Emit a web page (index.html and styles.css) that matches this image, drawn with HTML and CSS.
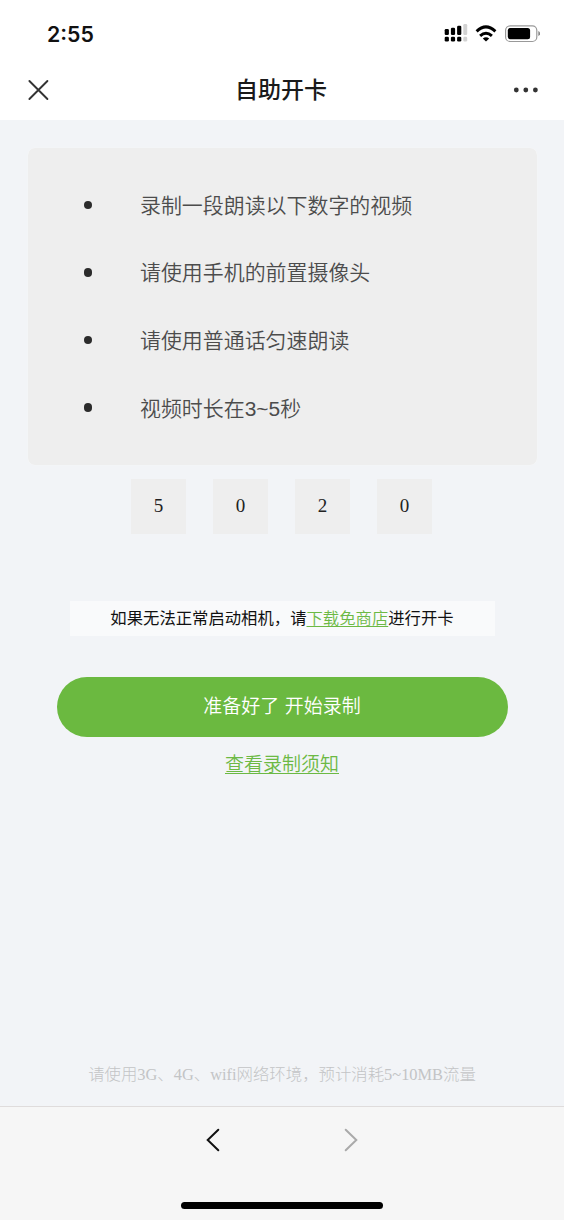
FILE: index.html
```html
<!DOCTYPE html>
<html lang="zh-CN">
<head>
<meta charset="utf-8">
<title>自助开卡</title>
<link rel="stylesheet" href="styles.css">
</head>
<body>
<div class="screen">
  <div class="status">
    <span class="time">2:55</span>
    <svg class="status-icons" width="100" height="20" viewBox="0 0 100 20">
      <g fill="#000">
        <rect x="4.7" y="5" width="4.2" height="6" rx="1.3"/><rect x="10.9" y="3.7" width="4.2" height="7.3" rx="1.3"/><rect x="17.1" y="1.7" width="4.2" height="9.3" rx="1.3"/>
        <rect x="4.7" y="12.8" width="4.2" height="4.8" rx="1.3"/><rect x="10.9" y="12.8" width="4.2" height="4.8" rx="1.3"/><rect x="17.1" y="12.8" width="4.2" height="4.8" rx="1.3"/>
      </g>
      <g fill="#d2d2d2"><rect x="23.3" y="0" width="3.9" height="11" rx="1.2"/><rect x="23.3" y="12.8" width="3.9" height="4.6" rx="1.2"/></g>
      <g fill="none" stroke="#000" stroke-width="2.9"><path d="M36.6 7.4Q45.9-1.6 55.4 7.4"/><path d="M40.1 11.9Q46 6.5 51.9 11.9"/></g>
      <path d="M46 17.5l-3.2-3.1q3.2-2.4 6.4 0z"/>
      <rect x="65.6" y="1.8" width="31.2" height="15.7" rx="4.5" fill="none" stroke="#999" stroke-width="1.2"/>
      <rect x="67.8" y="4" width="22.3" height="11.3" rx="2.5"/>
      <path d="M98.3 7v5q1.8-.6 1.8-2.5T98.3 7z" fill="#888"/>
    </svg>
  </div>
  <header class="nav">
    <svg width="22" height="22" viewBox="0 0 22 22"><path d="M2.4 2l18 18M20.4 2l-18 18" stroke="#333" stroke-width="1.9" stroke-linecap="round"/></svg>
    <h1 class="title">自助开卡</h1>
    <svg width="26" height="22" viewBox="0 0 26 22" fill="#333"><circle cx="3.3" cy="11" r="2.4"/><circle cx="12.8" cy="11" r="2.4"/><circle cx="22.4" cy="11" r="2.4"/></svg>
  </header>
  <main class="content">
    <ul class="rules">
      <li><span>录制一段朗读以下数字的视频</span></li>
      <li><span>请使用手机的前置摄像头</span></li>
      <li><span>请使用普通话匀速朗读</span></li>
      <li><span>视频时长在3~5秒</span></li>
    </ul>
    <div class="digits"><span>5</span><span>0</span><span>2</span><span>0</span></div>
    <p class="notice">如果无法正常启动相机，请<a class="link">下载免商店</a>进行开卡</p>
    <button class="start">准备好了 开始录制</button>
    <a class="guide link">查看录制须知</a>
    <p class="traffic">请使用3G、4G、wifi网络环境，预计消耗5~10MB流量</p>
  </main>
  <footer class="toolbar">
    <div class="arrows">
      <svg width="14" height="24" viewBox="0 0 14 24"><path d="M12.3 1.7L1.7 12l10.6 10.3" fill="none" stroke="#111" stroke-width="2" stroke-linecap="round"/></svg>
      <svg width="14" height="24" viewBox="0 0 14 24"><path d="M1.7 1.7L12.3 12 1.7 22.3" fill="none" stroke="#aaa" stroke-width="2" stroke-linecap="round"/></svg>
    </div>
    <div class="home"></div>
  </footer>
</div>
</body>
</html>
```
FILE: styles.css
```css
* { box-sizing: border-box; margin: 0; padding: 0; }
body { font-family: "Liberation Sans", "Noto Sans CJK SC", sans-serif; background: #fff; }
.screen { width: 564px; height: 1220px; display: flex; flex-direction: column; overflow: hidden; }
.status { height: 60px; padding: 24px 24px 0 47px; display: flex; justify-content: space-between; align-items: flex-start; }
.time { font: 600 21.3px/20px Inter, sans-serif; color: #111; }
.nav { height: 60px; padding: 0 25px 0 27px; display: flex; align-items: center; justify-content: space-between; }
.title { padding-bottom: 4px; font: 500 23px/30px "Noto Sans CJK SC", sans-serif; color: #1a1a1a; }
.content { height: 986px; padding: 28px 28px 0; background: #f2f4f7; display: flex; flex-direction: column; align-items: center; }
.rules { width: 509px; height: 317px; padding: 23px 0 0 56px; list-style: none; background: #eee; border-radius: 7px; box-shadow: 0 0 1px #fff; }
.rules li { height: 67.6px; display: flex; align-items: center; gap: 48px; font-size: 20.95px; font-weight: 350; color: #4c4c4c; }
.rules li::before { content: ""; width: 8.5px; height: 8.5px; border-radius: 50%; background: #2b2b2b; }
.rules span { padding-bottom: 2px; }
.digits { display: flex; gap: 27px; margin: 14px 1px 0 0; }
.digits span { width: 55px; height: 55px; background: #eee; font: 19px/54px "Liberation Serif", serif; text-align: center; color: #222; }
.notice { width: 425px; height: 35px; margin-top: 67px; background: #f9fafb; text-align: center; font-size: 16.35px; line-height: 34px; color: #111; white-space: nowrap; }
.link { font-weight: 350; color: #6cb944; text-decoration: underline; text-underline-offset: 2px; text-decoration-thickness: 1px; }
.start { width: 451px; height: 60px; margin: 41px 0 0; border: 0; border-radius: 30px; background: #6bb940; color: #fff; font: 350 19px/58px "Liberation Sans", "Noto Sans CJK SC", sans-serif; }
.guide { margin-top: 15px; font-size: 19px; line-height: 26px; }
.traffic { margin-top: auto; margin-bottom: 18px; font: 300 16.4px/26px "Liberation Serif", "Noto Sans CJK SC", serif; color: #c3c4c6; white-space: nowrap; }
.toolbar { height: 114px; padding-top: 21px; background: #f6f6f6; border-top: 1px solid #dfdcdc; display: flex; flex-direction: column; align-items: center; }
.arrows { display: flex; gap: 124px; }
.home { width: 202px; height: 7px; margin-top: 50px; border-radius: 4px; background: #000; }
```
